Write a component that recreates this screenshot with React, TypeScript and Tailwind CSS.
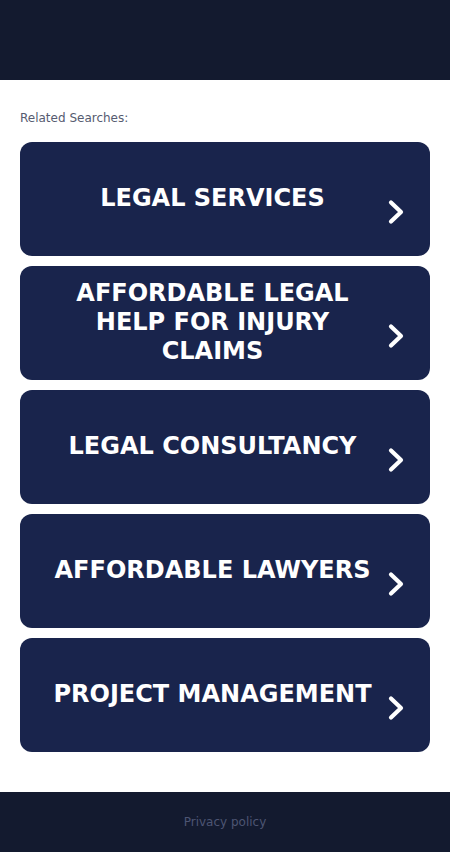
const items = [
  'LEGAL SERVICES',
  'AFFORDABLE LEGAL HELP FOR INJURY CLAIMS',
  'LEGAL CONSULTANCY',
  'AFFORDABLE LAWYERS',
  'PROJECT MANAGEMENT',
];

const Chevron = () => (
  <svg width="20" height="28" viewBox="0 0 20 28" className="absolute right-[24px] top-1/2 mt-[-1px]" fill="none">
    <path d="M5 4.5 L15 14 L5 23.5" stroke="white" strokeWidth="4.2" strokeLinecap="round" strokeLinejoin="round" />
  </svg>
);

export default function App() {
  return (
    <div className="min-h-[852px] flex flex-col bg-white" style={{ fontFamily: '"DejaVu Sans", sans-serif' }}>
      <header className="h-[80px] bg-[#131a2f]" />

      <main className="flex-1 px-[20px] pt-[30px] pb-[40px]">
        <div className="text-[12px] leading-[16px] text-[#565b70] mb-[16px]">Related Searches:</div>
        <div className="flex flex-col gap-[10px]">
          {items.map((t) => (
            <a key={t} href="#" className="relative h-[114px] rounded-[12px] bg-[#19244c] flex items-center">
              <div className="w-full pl-[27px] pr-[52px] mt-[-1px] text-center text-white font-bold text-[24px] leading-[29px]">
                {t}
              </div>
              <Chevron />
            </a>
          ))}
        </div>
      </main>

      <footer className="h-[60px] bg-[#131a2f] flex items-center justify-center">
        <span className="text-[12px] text-[#4d5573]">Privacy policy</span>
      </footer>
    </div>
  );
}
